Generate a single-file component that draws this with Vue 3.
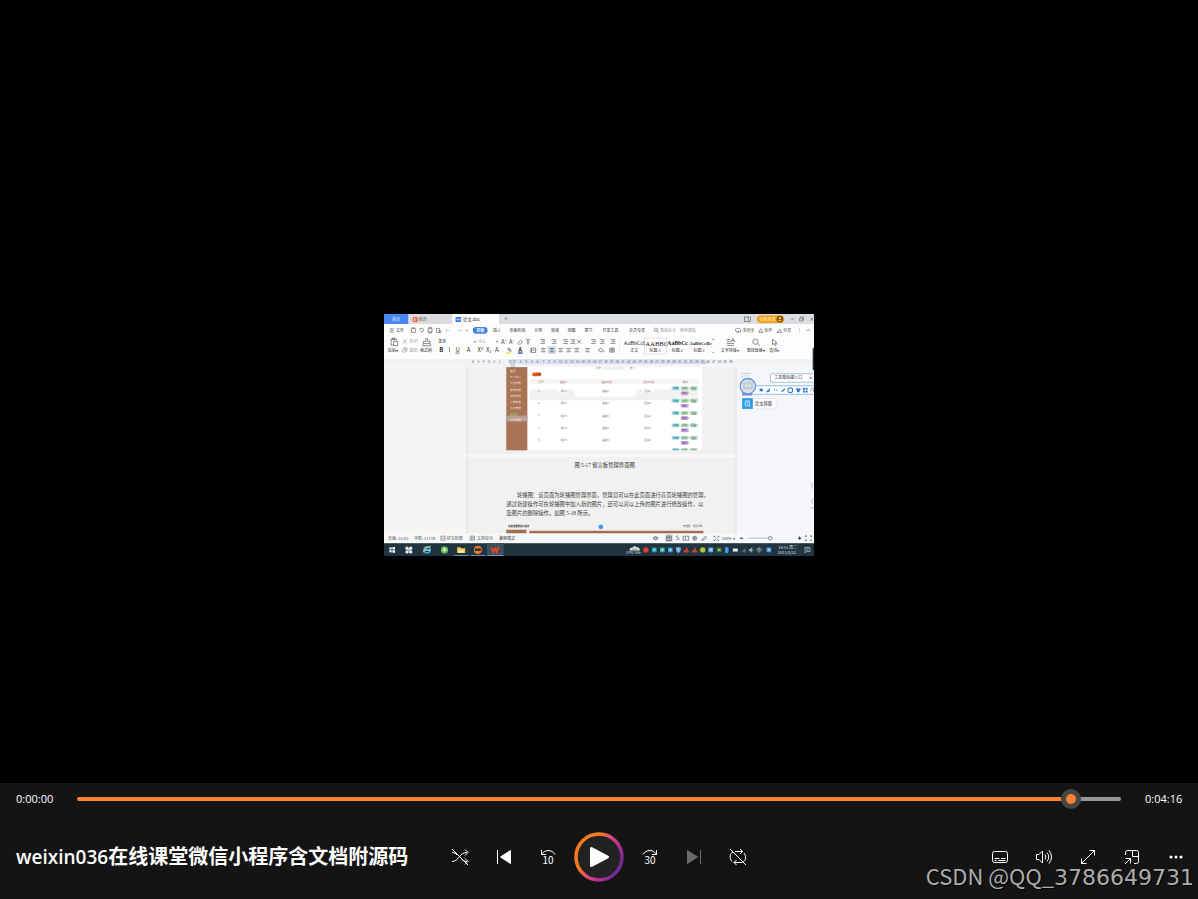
<script setup>
import { computed, ref } from 'vue'

const duration = 256
const position = ref(246)
const progress = computed(() => (position.value / duration) * 100 + '%')

// Labels inside the video frame: x, baseline, size, text, colour
const labels = [
  [24, 21, 12, '首页', '#dfeaff'],
  [104, 22, 12, '稻壳', '#555'],
  [236, 22, 13, '论文.doc', '#222'],
  [360, 22, 17, '+', '#333'],
  [36, 54, 12, '文件', '#333'],
  [326, 54, 12, '插入', '#333'],
  [376, 54, 12, '页面布局', '#333'],
  [450, 54, 12, '引用', '#333'],
  [500, 54, 12, '审阅', '#333'],
  [549, 54, 12, '视图', '#333'],
  [600, 54, 12, '章节', '#333'],
  [654, 54, 12, '开发工具', '#333'],
  [733, 54, 12, '会员专享', '#333'],
  [826, 54, 12, '查找命令、搜索模板', '#999'],
  [1073, 54, 12, '未同步', '#444'],
  [1138, 54, 12, '协作', '#444'],
  [1195, 54, 12, '分享', '#444'],
  [12, 114, 12, '粘贴▾', '#333'],
  [76, 88, 12, '剪切', '#aaa'],
  [76, 114, 12, '复制', '#999'],
  [108, 114, 12, '格式刷', '#333'],
  [162, 88, 12, '黑体', '#333'],
  [270, 88, 12, '▾', '#777'],
  [282, 88, 12, '小三', '#888'],
  [334, 88, 12, '▾', '#777'],
  [737, 114, 12, '正文', '#333'],
  [795, 114, 12, '标题 1', '#333'],
  [861, 114, 12, '标题 2', '#333'],
  [926, 114, 12, '标题 3', '#333'],
  [1008, 114, 12, '文字排版▾', '#333'],
  [1086, 114, 12, '查找替换▾', '#333'],
  [1153, 114, 12, '选择▾', '#333'],
  [1168, 196, 12, '工具箱快捷入口', '#333'],
  [1110, 273, 13, '论文排版', '#222'],
  [12, 677, 12, '页面: 35/43', '#555'],
  [90, 677, 12, '字数: 11739', '#555'],
  [188, 677, 12, '拼写检查', '#555'],
  [278, 677, 12, '文档校对', '#555'],
  [344, 677, 12, '兼容模式', '#333'],
  [1010, 677, 12, '100% ▾', '#555'],
  [1180, 703, 12, '14:51 周二', '#dce5e8'],
  [1178, 717, 12, '2021/8/31', '#dce5e8'],
  [724, 717, 12, 'CPU 5%', '#dce5e8'],
]

const styleSamples = [
  [717, 93, 17, 'AaBbCcI', 400],
  [782, 95, 20, 'AABBC', 400],
  [848, 94, 17, 'AaBbCc', 700],
  [914, 93, 14, 'AaBbCcDc', 700],
]

const formatting = [
  [165, 'B', 700], [193, 'I', 400], [214, 'U', 400], [248, 'A', 400],
  [280, 'X²', 400], [305, 'X₂', 400], [332, 'A', 400], [367, '✎', 400], [402, 'A', 700],
]

const listIcons = [468, 502, 536, 558, 620, 646, 678]
const alignIcons = [470, 496, 522, 546, 570, 602]
const ruler = Array.from({ length: 46 }, (_, i) => i + 1)
const sidebar = ['首页', '个人中心', '学生管理', '教师管理', '课程管理', '公告管理', '论坛管理', '留言板', '系统管理']
const rows = [0, 1, 2, 3, 4]
const clusters = [0, 1, 2, 3, 4, 5]

const paragraph = [
  [398, 547, '轮播图：该页面为轮播图管理界面，管理员可以在此页面进行首页轮播图的管理，'],
  [366, 574, '通过新建操作可在轮播图中加入新的图片，还可以对以上传的图片进行修改操作，以'],
  [366, 601, '及图片的删除操作。如图 5-18 所示。'],
]

const tray = [
  [784, '#d8402c'], [809, '#2fa3b5'], [833, '#35b0a8'], [857, '#3b9bd9'], [881, '#79b9ef'],
  [905, '#d23c34'], [930, '#d23c34'], [954, '#a9c936'], [978, '#5eaef0'], [1003, '#3f7f2a'],
  [1026, '#36a3ef'], [1051, '#e5ecef'], [1076, '#60747d'], [1099, '#a8b6bc'], [1123, '#a8b6bc'], [1152, '#459bea'],
]
</script>

<template>
  <main class="player">
    <section class="stage" aria-label="视频">
      <svg class="frame" viewBox="0 0 1287 726" role="img" aria-label="视频画面">
        <rect width="1287" height="726" fill="#f4f5f6" />

        <!-- title bar -->
        <rect width="1287" height="30" fill="#dadee2" />
        <rect width="73" height="30" fill="#4b87f3" />
        <rect x="73" width="131" height="30" fill="#d9dbde" />
        <rect x="204" width="140" height="30" fill="#fff" />
        <rect x="86" y="9" width="15" height="15" rx="3" fill="#ee6238" />
        <path d="M91 12v9q8-4 0-9" fill="none" stroke="#fff" stroke-width="2" />
        <rect x="214" y="9" width="17" height="15" rx="2" fill="#2b7be5" />
        <path d="M217 14l3 5 3-5 3 5 3-5" fill="none" stroke="#fff" stroke-width="2" />
        <g fill="none" stroke="#666" stroke-width="2">
          <rect x="1079" y="9" width="18" height="13" />
          <path d="M1090 9v13M1218 15h10M1244 12h9v9h-9zM1247 12v-3h9v9h-3M1276 11l9 9M1285 11l-9 9" />
        </g>
        <rect x="1116" y="4" width="82" height="23" rx="11" fill="#f3a322" />
        <text x="1124" y="20" font-size="12" fill="#fff2c8">访客登录</text>
        <circle cx="1185" cy="15" r="10" fill="#7a4b12" />
        <circle cx="1185" cy="12" r="4" fill="#f5b656" />
        <path d="M1178 21q7-9 14 0" fill="#f5b656" />

        <!-- ribbon -->
        <rect y="30" width="1287" height="105" fill="#fdfdfd" />
        <g fill="none" stroke="#666" stroke-width="2">
          <path d="M17 44h12M17 49h12M17 54h12" />
          <path d="M82 44h12v11h-12zM85 44v-3h6v3M108 43h8q7 5 0 9h-4v4M108 43v7M132 44h12v9h-12zM134 44v-4h8v4M134 53v4h8v-4M157 43h9v12h-9zM163 50h7v6h-7" />
          <path d="M184 49l5-5M184 49l5 5M184 49h12M232 49l-5-5M232 49l-5 5M232 49h-12" stroke="#c3c6c9" />
          <path d="M244 47l4 4 4-4" />
          <circle cx="814" cy="47" r="5" />
          <path d="M818 51l5 5M1054 54q-6-12 5-11 11-1 8 11zM1060 49v7M1127 44l-5 11h12zM1176 55h14l-4-9-5 4zM1243 42v2M1243 48v2M1243 54v2M1264 52l6-6 6 6" />
        </g>
        <rect x="266" y="39" width="44" height="20" rx="10" fill="#3b7fe0" />
        <text x="276" y="54" font-size="12" font-weight="700" fill="#fff">开始</text>
        <g fill="none" stroke="#555" stroke-width="2">
          <path d="M21 75h16v5M21 75v18h8M25 72h8v5h-8zM29 82h12v13h-12z" />
          <path d="M125 74h6v8h7v6h-20v-6h7zM118 88l-2 7h24l-2-7" />
          <path d="M57 76l10 12M67 76l-10 12M56 105h9v9h-9zM60 105v-4h9v9h-4" stroke="#999" />
          <path d="M400 88l8-9 7 5-7 6h-6M424 77h14M431 77v5M426 84h10M428 89h6M440 102v13" />
          <path d="M441 102h13v13h-13zM444 108h7M578 77l12 12M590 77l-12 12" />
          <path v-for="x in listIcons" :key="x" :d="`M${x} 77h14M${x + 4} 82h10M${x} 88h14`" />
        </g>
        <rect x="490" y="97" width="24" height="22" fill="#cfdae3" />
        <g fill="none" stroke="#555" stroke-width="2">
          <path v-for="x in alignIcons" :key="x" :d="`M${x} 103h14M${x + 2} 108h9M${x} 113h14`" />
          <path d="M646 113l-4-6 7-5 6 6-3 5zM658 110v4M676 102h13v12h-13zM683 102v12M676 108h13" />
        </g>
        <text x="350" y="90" font-size="18" fill="#444">A⁺</text>
        <text x="374" y="90" font-size="17" fill="#444">A⁻</text>
        <text
          v-for="[x, glyph, weight] in formatting"
          :key="x"
          :x="x"
          y="115"
          font-size="18"
          :font-weight="weight"
          fill="#333"
        >{{ glyph }}</text>
        <path d="M214 117h12" stroke="#333" stroke-width="2" />
        <path d="M365 117h15" stroke="#e9e520" stroke-width="4" />
        <path d="M401 117h14" stroke="#2540b0" stroke-width="4" />
        <path d="M150 71v50M460 71v50M705 71v50M970 71v50" stroke="#e6e8ea" stroke-width="2" />
        <rect x="780" y="72" width="65" height="48" fill="none" stroke="#d3d6d9" stroke-width="2" />
        <text
          v-for="[x, y, size, sample, weight] in styleSamples"
          :key="x"
          class="serif"
          :x="x"
          :y="y"
          :font-size="size"
          :font-weight="weight"
          fill="#222"
        >{{ sample }}</text>
        <g fill="none" stroke="#555" stroke-width="2">
          <path d="M1026 76h10M1026 82h10M1026 88h22M1026 94h22M1038 84l6-11 6 11M1040 80h8" />
          <circle cx="1112" cy="83" r="8" />
          <path d="M1118 89l7 7M1163 75v17l4-4 4 7 3-2-3-6h6zM982 78l3-3 3 3M982 113l3 3 3-3" />
        </g>

        <!-- ruler -->
        <rect y="135" width="1287" height="18" fill="#f0f2f4" />
        <rect x="374" y="135" width="588" height="15" fill="#d9e2ee" />
        <text
          v-for="n in ruler"
          :key="n"
          class="middle"
          :x="n < 7 ? 250 + n * 16 : 256 + n * 17"
          y="146"
          font-size="9"
          fill="#506070"
        >{{ n < 7 ? 7 - n : n - 6 }}</text>
        <path d="M378 140h12l-6 8zM378 152h12v6h-12M953 147h12l-6-7z" fill="#fff" stroke="#8b96a2" stroke-width="2" />

        <!-- document page -->
        <rect x="248" y="160" width="806" height="497" fill="#f1f1f2" />
        <path d="M248 160v497M1054 160v497" stroke="#e5e6e8" stroke-width="5" />
        <path d="M248 424h806" stroke="#f8f8f8" stroke-width="8" />
        <rect x="429" y="159" width="523" height="249" fill="#fff" />
        <rect x="366" y="159" width="63" height="249" fill="#a87254" />
        <rect x="366" y="304" width="63" height="17" fill="#b9a49a" />
        <g v-for="(item, i) in sidebar" :key="item">
          <text :x="378" :y="175 + i * 18" font-size="8" :fill="i === 7 ? '#91d26b' : '#f5e5da'">{{ item }}</text>
          <path :d="`M366 ${182 + i * 18}h63`" stroke="#bd8b6e" />
        </g>
        <rect x="435" y="195" width="506" height="14" fill="#f5f3f3" />
        <rect x="435" y="226" width="506" height="32" fill="#f1f1f1" />
        <rect x="571" y="218" width="184" height="29" fill="#fff" />
        <rect x="522" y="222" width="28" height="14" fill="#fff" />
        <rect x="774" y="222" width="32" height="14" fill="#fff" />
        <text x="634" y="164" font-size="8" fill="#888">标题</text>
        <rect x="655" y="158" width="67" height="9" rx="3" fill="#f0f0f0" />
        <text x="735" y="164" font-size="8" fill="#888">搜索</text>
        <rect x="443" y="175" width="28" height="11" rx="5" fill="#ec6329" />
        <text x="448" y="183" font-size="7" fill="#611">＋新增</text>
        <g font-size="8" fill="#b4777b">
          <text x="462" y="206">序号</text>
          <text x="526" y="206">留言人</text>
          <text x="650" y="206">留言内容</text>
          <text x="776" y="206">回复内容</text>
          <text x="894" y="206">操作</text>
        </g>
        <g v-for="r in rows" :key="r" font-size="8" fill="#777">
          <text x="461" :y="232 + r * 37">{{ r + 1 }}</text>
          <text x="528" :y="233 + r * 37">用户{{ r + 1 }}</text>
          <text x="653" :y="233 + r * 37">留言{{ r + 1 }}</text>
          <text x="779" :y="233 + r * 37">回复{{ r + 1 }}</text>
        </g>
        <g v-for="r in clusters" :key="r">
          <g font-size="7" fill="#335d61">
            <rect x="861" :y="217 + r * 37" width="24" height="11" rx="4" fill="#8fdcea" />
            <text x="866" :y="225 + r * 37">详情</text>
            <rect x="888" :y="217 + r * 37" width="24" height="11" rx="4" fill="#b4dcb4" />
            <text x="893" :y="225 + r * 37">修改</text>
            <rect x="915" :y="217 + r * 37" width="24" height="11" rx="4" fill="#b4dcb4" />
            <text x="920" :y="225 + r * 37">回复</text>
          </g>
          <g v-if="r < 5">
            <rect x="888" :y="232 + r * 37" width="24" height="11" rx="4" fill="#c9a6df" />
            <text x="893" :y="240 + r * 37" font-size="7" fill="#56356d">删除</text>
          </g>
        </g>
        <rect x="850" y="408" width="100" height="10" fill="#f1f1f2" />

        <text class="serif" x="570" y="457" font-size="16" fill="#333">图 5-17 留言板管理界面图</text>
        <text
          v-for="[x, y, line] in paragraph"
          :key="y"
          class="serif"
          :x="x"
          :y="y"
          font-size="16"
          fill="#3a3a3a"
        >{{ line }}</text>
        <text x="372" y="639" font-size="7" font-weight="700" fill="#222">在线课堂微信小程序</text>
        <circle cx="649" cy="637" r="7" fill="#3b98f2" />
        <text x="896" y="639" font-size="7" fill="#555">管理员　退出登录</text>
        <rect x="366" y="645" width="60" height="12" fill="#a46c51" />
        <rect x="435" y="649" width="521" height="8" fill="#a46c51" />
        <path d="M366 645h586" stroke="#e8e4e1" stroke-width="2" />

        <!-- side tools -->
        <rect x="1056" y="153" width="231" height="504" fill="#f4f6f9" />
        <rect x="1283" y="102" width="4" height="66" fill="#24313a" />
        <rect x="1157" y="179" width="140" height="25" rx="3" fill="#fff" stroke="#a8c0df" stroke-width="3" />
        <path d="M1273 187l8 8M1281 187l-8 8" stroke="#555" stroke-width="2" />
        <rect x="1085" y="215" width="212" height="25" rx="3" fill="#fff" stroke="#93bce9" stroke-width="3" />
        <path d="M1072 233h30v11h-30z" fill="#8a85d9" />
        <path d="M1072 192v-14h28M1079 188l6-6 6 6" fill="none" stroke="#bac2cd" stroke-width="2" />
        <circle cx="1089" cy="216" r="23" fill="#d9e2ef" stroke="#5c94d9" stroke-width="4" />
        <path d="M1074 205h30v20h-30zM1081 200h15v5" fill="#c1c6cf" />
        <path d="M1080 211h7v7h-7zM1091 211h7v7h-7z" fill="#eef2f7" />
        <g fill="#2878d0">
          <path d="M1122 227l7-5 7 5-7 6zM1145 230q7-1 9-9 4 13-9 13zM1189 231l10-9 2 3-9 9zM1235 222l5 2 5-2 3 4-4 2v6h-8v-6l-4-2zM1254 221h6v6h-6zM1262 221h6v6h-6zM1254 229h6v6h-6zM1262 229h6v6h-6z" />
          <circle cx="1169" cy="227" r="2" /><circle cx="1176" cy="227" r="2" />
        </g>
        <circle cx="1216" cy="228" r="7" fill="none" stroke="#2878d0" stroke-width="3" />
        <path d="M1278 222h7v12M1277 232v-7" fill="none" stroke="#777" stroke-width="2" />
        <rect x="1073" y="253" width="100" height="31" fill="#fff" stroke="#dbe1e7" stroke-width="2" />
        <rect x="1072" y="252" width="32" height="32" fill="#2b9be8" />
        <path d="M1081 260h13v15h-13zM1085 265h6M1085 269h5M1092 273l5 4" fill="none" stroke="#fff" stroke-width="2" />
        <path d="M1281 505v18M1284 552q-8 8 0 18M1276 580h11" stroke="#9aa6b0" stroke-width="2" fill="none" />

        <!-- status bar -->
        <rect y="657" width="1287" height="30" fill="#f7f8f9" />
        <g fill="none" stroke="#777" stroke-width="2">
          <path d="M170 665h13v12h-13zM173 670l3 4 5-6M258 665h13v12h-13zM262 668v6l6-3z" />
        </g>
        <rect x="842" y="660" width="22" height="22" fill="#c9cfd6" />
        <g fill="none" stroke="#555" stroke-width="2">
          <path d="M805 671q8-9 16 0-8 9-16 0" /><circle cx="813" cy="671" r="3" />
          <path d="M846 665h14v13h-14zM849 669h8M849 673h8M872 665h8M876 670h8M876 675h8M895 665h7v12h-7zM904 665h8v12h-8M950 677l12-12 4 4-11 8zM988 665l5 5M1002 665l-5 5M988 679l5-5M1002 679l-5-5M988 668v-3h3M999 665h3v3M988 676v3h3M999 679h3v-3" />
          <circle cx="930" cy="671" r="6" /><path d="M924 671h12M930 665v12" />
          <path d="M1065 671h10M1239 671h10M1244 666v10" stroke="#333" stroke-width="3" />
          <path d="M1090 671h72" stroke="#9a9a9a" />
          <circle cx="1156" cy="671" r="5" fill="#fff" />
          <path d="M1262 668v-4h4M1275 664h4v4M1262 674v4h4M1275 678h4v-4" stroke="#333" />
        </g>

        <!-- taskbar -->
        <rect y="686" width="1287" height="40" fill="#21343f" />
        <path d="M16 699l7-1v7h-7zM25 698l8-1v8h-8zM16 707h7v7l-7-1zM25 707h8v8l-8-1z" fill="#f5fafc" />
        <rect x="308" y="686" width="50" height="40" fill="#3e505a" />
        <g fill="#eef2f4">
          <circle cx="69" cy="701" r="5" /><circle cx="80" cy="701" r="5" />
          <circle cx="69" cy="712" r="5" /><circle cx="80" cy="712" r="5" />
        </g>
        <path d="M71 703l7 7M78 703l-7 7" stroke="#eef2f4" stroke-width="2" />
        <circle cx="129" cy="706" r="9" fill="none" stroke="#37a5df" stroke-width="5" />
        <path d="M124 707h14" stroke="#b8e1ef" stroke-width="4" />
        <path d="M118 713q5-14 22-18" fill="none" stroke="#ebd758" stroke-width="3" />
        <circle cx="181" cy="706" r="11" fill="#5fb94f" />
        <path d="M175 703h12M175 708h12M181 699v14" stroke="#d7f1cd" stroke-width="3" />
        <path d="M219 698h9l3 3h12v14h-24z" fill="#efc64e" />
        <path d="M223 707h16v8h-16z" fill="#f6e7aa" />
        <circle cx="281" cy="706" r="12" fill="#e97c2b" />
        <path d="M272 702h18v7h-18z" fill="#292a2c" />
        <path d="M322 700l5 12 6-9 4 9 6-15" fill="none" stroke="#e44728" stroke-width="6" />
        <path d="M209 724h44M260 724h44M309 724h48" stroke="#78b3d9" stroke-width="4" />
        <path d="M735 708q0-9 9-9 5-7 13-1 9 0 9 10z" fill="#e0e3e4" />
        <path d="M741 707l7-5 4 5 6-5" stroke="#777" stroke-width="2" fill="none" />
        <g v-for="([x, color], i) in tray" :key="x">
          <circle v-if="i === 0 || i === 7" :cx="x" cy="706" r="8" :fill="color" />
          <path v-else-if="i === 4" :d="`M${x - 7} 698h14v8q-2 7-7 9-5-2-7-9z`" :fill="color" />
          <path v-else-if="i === 5 || i === 6" :d="`M${x - 8} 714v-7l6-1 3-9 4 10 4 7z`" :fill="color" />
          <path v-else-if="i === 10" :d="`M${x - 5} 698h7l3 3v11l-3 3h-7z`" :fill="color" />
          <path v-else-if="i === 11" :d="`M${x - 7} 702h15v9h-15z`" :fill="color" />
          <path v-else-if="i === 12" :d="`M${x - 6} 713l12-13v13z`" :fill="color" />
          <path v-else-if="i === 13" :d="`M${x - 6} 704h4l4-5v15l-4-5h-4zM${x + 4} 703l4 6M${x + 8} 703l-4 6`" :fill="color" :stroke="color" />
          <path v-else-if="i === 14" :d="`M${x - 6} 702h12v7h-12zM${x} 698v17`" fill="none" :stroke="color" stroke-width="2" />
          <g v-else>
            <rect :x="x - 7" y="699" width="14" height="14" rx="2" :fill="color" />
            <path :d="`M${x - 3} 706h7M${x} 703v6`" stroke="#e2f1f3" stroke-width="2" />
          </g>
        </g>
        <path d="M1260 699h15v12h-10l-5 4zM1264 703h7M1264 707h7" fill="none" stroke="#cbd5d9" stroke-width="2" />

        <text
          v-for="[x, y, size, label, color] in labels"
          :key="`${x}-${y}`"
          :x="x"
          :y="y"
          :font-size="size"
          :fill="color"
        >{{ label }}</text>
      </svg>
    </section>

    <footer class="controls">
      <div class="timeline">
        <span class="time">0:00:00</span>
        <input
          v-model.number="position"
          class="seek"
          type="range"
          min="0"
          :max="duration"
          aria-label="播放进度"
          :style="{ '--progress': progress }"
        />
        <span class="time">0:04:16</span>
      </div>

      <div class="bar">
        <h1 class="title"><span class="latin">weixin036</span>在线课堂微信小程序含文档附源码</h1>

        <div class="transport">
          <button type="button" aria-label="随机播放">
            <svg viewBox="0 0 24 24" class="icon">
              <path d="M4 16.5c7 0 7-9 15-9M4 7.5c2 0 4 1 5 2.500M13 13.500c2 2 3 3 6 3M17 4.500l3 3-3 3M17 13.500l3 3-3 3M4 4l16 16" />
            </svg>
          </button>
          <button type="button" aria-label="上一个">
            <svg viewBox="0 0 24 24" class="icon">
              <path d="M5.5 5v14" />
              <path class="solid" d="M18.500 5.500v13L8.500 12z" />
            </svg>
          </button>
          <button type="button" aria-label="后退 10 秒">
            <svg viewBox="0 0 24 24" class="icon">
              <path d="M5.5 5v4.5H10M5.5 9.5C8 4.5 16 4 19 9.5" />
              <text x="12" y="19">10</text>
            </svg>
          </button>
          <button type="button" class="play" aria-label="播放">
            <svg viewBox="0 0 50 50" class="play-icon">
              <defs>
                <linearGradient id="ring" x1="0" y1="0.2" x2="1" y2="0.8">
                  <stop offset="0.3" stop-color="#f47b20" />
                  <stop offset="0.5" stop-color="#e14a7c" />
                  <stop offset="0.7" stop-color="#b92f92" />
                  <stop offset="0.9" stop-color="#6f2c91" />
                </linearGradient>
              </defs>
              <circle cx="25" cy="25" r="23" fill="#222" stroke="url(#ring)" stroke-width="3.5" />
              <path d="M17.5 16.5v17L33.500 25z" fill="#fff" stroke="#fff" stroke-width="3" stroke-linejoin="round" />
            </svg>
          </button>
          <button type="button" aria-label="前进 30 秒">
            <svg viewBox="0 0 24 24" class="icon">
              <path d="M18.5 5v4.5H14M18.5 9.5C16 4.500 8 4 5 9.500" />
              <text x="12" y="19">30</text>
            </svg>
          </button>
          <button type="button" disabled aria-label="下一个">
            <svg viewBox="0 0 24 24" class="icon">
              <path d="M18.500 5v14" />
              <path class="solid" d="M5.500 5.500v13L15.500 12z" />
            </svg>
          </button>
          <button type="button" aria-label="循环播放">
            <svg viewBox="0 0 24 24" class="icon">
              <path d="M9 6.500h7.500M14 4l2.500 2.500L14 9M18 8c3 4 1.500 9.500-3 9.500H8M10.500 15L8 17.500l2.500 2.500M6 16.500C3 13 4 8 7 7M4 4l16 16" />
            </svg>
          </button>
        </div>

        <div class="options">
          <button type="button" aria-label="字幕">
            <svg viewBox="0 0 24 24" class="icon">
              <rect x="4.500" y="6.500" width="15" height="11" rx="2" />
              <path d="M6.500 13.500h5M13 13.500h4.500M6.500 15.500h2M10 15.500h7.500" />
            </svg>
          </button>
          <button type="button" aria-label="音量">
            <svg viewBox="0 0 24 24" class="icon">
              <path d="M4.500 9.500H7l3.500-3.500v12L7 14.500H4.500zM13 9.500q1.800 2.500 0 5M15 7.500q3.500 4.500 0 9M17 5.500q5 6.500 0 13" />
            </svg>
          </button>
          <button type="button" aria-label="全屏">
            <svg viewBox="0 0 24 24" class="icon">
              <path d="M13.500 5.500h5v5M18.500 5.500l-13 13M5.500 13.500v5h5" />
            </svg>
          </button>
          <button type="button" aria-label="迷你播放器">
            <svg viewBox="0 0 24 24" class="icon">
              <path d="M5.500 10V7.500a2 2 0 0 1 2-2h9a2 2 0 0 1 2 2v9a2 2 0 0 1-2 2H14M12.500 5.500v6h6M5.500 13.500h5v5M10.500 13.500l-5.500 5.500" />
            </svg>
          </button>
          <button type="button" aria-label="更多">
            <svg viewBox="0 0 24 24" class="icon dots">
              <circle cx="7" cy="12" r="1.500" />
              <circle cx="12" cy="12" r="1.500" />
              <circle cx="17" cy="12" r="1.500" />
            </svg>
          </button>
        </div>
      </div>
    </footer>

    <p class="watermark">CSDN @QQ_<span class="digits">3786649731</span></p>
  </main>
</template>

<style>
html,
body {
  background: #000;
}
</style>

<style scoped>
.player {
  position: relative;
  display: flex;
  flex-direction: column;
  min-height: 100vh;
  overflow: hidden;
  background: #000;
  color: #fff;
  font-family: 'Open Sans', 'Noto Sans CJK SC', sans-serif;
}

.stage {
  flex: 1;
  display: grid;
  place-items: center;
  padding-top: 87px;
}

.frame {
  display: block;
  width: 430px;
  max-width: 100%;
  font-family: 'Noto Sans CJK SC', sans-serif;
}

.frame .serif {
  font-family: 'Liberation Serif', 'Noto Sans CJK SC', serif;
}

.frame .middle {
  text-anchor: middle;
}

.controls {
  background: #141414;
}

.timeline {
  display: grid;
  grid-template-columns: 37px 1fr 37px;
  align-items: center;
  gap: 24px;
  height: 32px;
  padding: 0 16px;
}

.time {
  font-size: 11px;
  line-height: 16px;
  white-space: nowrap;
}

.seek {
  appearance: none;
  width: 100%;
  height: 20px;
  margin: 0;
  background: transparent;
}

.seek::-webkit-slider-runnable-track {
  height: 4px;
  border-radius: 2px;
  background: linear-gradient(to right, #ff8232 var(--progress), #969696 var(--progress));
}

.seek::-webkit-slider-thumb {
  appearance: none;
  width: 20px;
  height: 20px;
  margin-top: -8px;
  border: 5px solid #454545;
  border-radius: 50%;
  background: #ff8232;
}

.bar {
  display: grid;
  grid-template-columns: 1fr auto 1fr;
  align-items: center;
  height: 84px;
}

.title {
  margin: 0;
  padding-left: 16px;
  font-size: 20px;
  font-weight: 700;
  line-height: 28px;
  white-space: nowrap;
}

.latin {
  font-size: 19px;
  font-weight: 600;
}

.transport,
.options {
  display: flex;
  align-items: center;
}

.options {
  justify-content: flex-end;
}

button {
  display: grid;
  place-items: center;
  width: 44px;
  height: 44px;
  padding: 0;
  border: 0;
  background: none;
  color: #fff;
}

button:disabled {
  color: #6a6a6a;
}

.play {
  width: 58px;
  height: 58px;
}

.play-icon {
  width: 50px;
  height: 50px;
}

.icon {
  width: 24px;
  height: 24px;
  fill: none;
  stroke: currentColor;
  stroke-width: 1;
  stroke-linejoin: round;
}

.icon text {
  fill: currentColor;
  stroke: none;
  font-family: 'Noto Sans CJK SC', sans-serif;
  font-size: 10px;
  font-weight: 400;
  text-anchor: middle;
}

.icon .solid,
.dots {
  fill: currentColor;
}

.icon.dots {
  fill: currentColor;
  stroke: none;
}

.watermark {
  position: absolute;
  right: 4px;
  bottom: 5px;
  margin: 0;
  color: #adadad;
  font-family: 'Noto Sans CJK SC', sans-serif;
  font-size: 22px;
  line-height: 32px;
  text-shadow: 1px 1px 1px #000;
  white-space: nowrap;
  pointer-events: none;
}

.digits {
  font-family: 'DejaVu Sans', sans-serif;
}
</style>
